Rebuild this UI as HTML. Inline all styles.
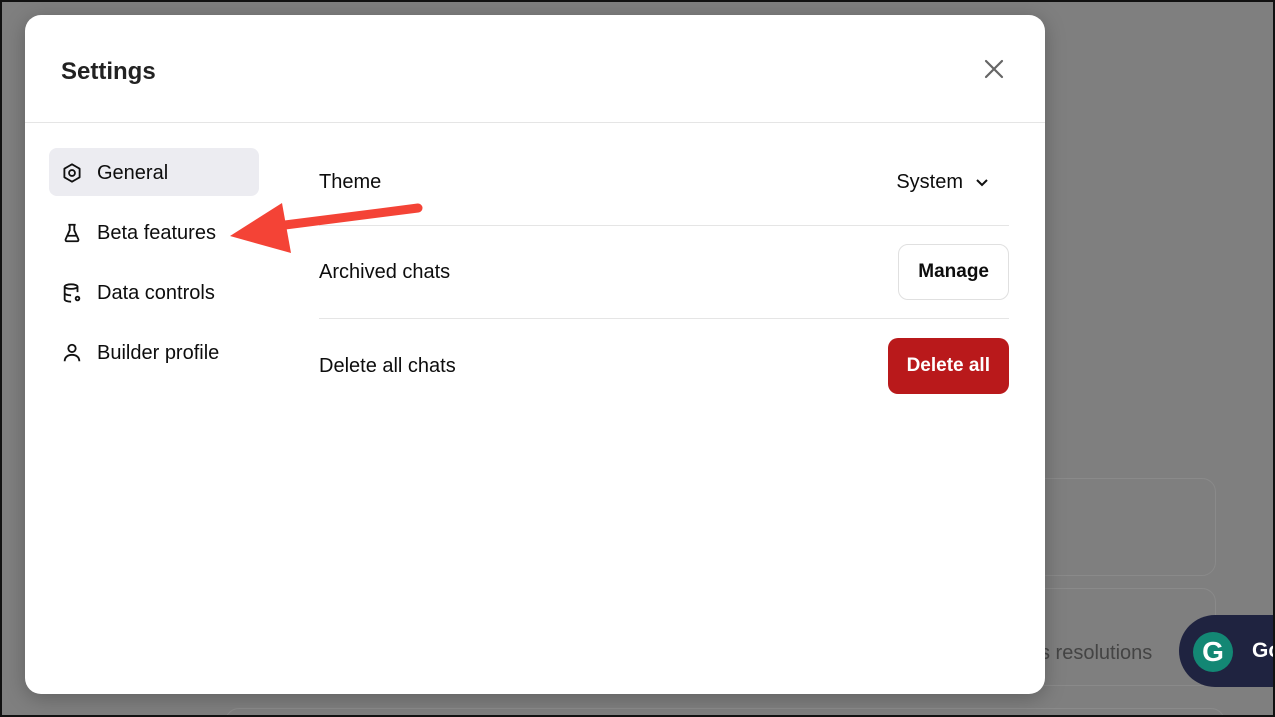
<!DOCTYPE html>
<html><head><style>
*{margin:0;padding:0;box-sizing:border-box}
html,body{width:1275px;height:717px;overflow:hidden}
body{background:#7f7f7f;position:relative;font-family:"Liberation Sans",sans-serif;color:#0d0d0d}
.frame{position:absolute;left:0;top:0;width:1275px;height:717px;border:2px solid #111;z-index:5;pointer-events:none}
.card{position:absolute;border:1px solid #8a8a8a;border-radius:14px}
.modal{position:absolute;left:25px;top:15px;width:1020px;height:679px;background:#fff;border-radius:16px;box-shadow:0 4px 20px rgba(0,0,0,.25)}
.hdr{height:108px;border-bottom:1px solid #e5e5e5;position:relative}
.hdr h1{position:absolute;left:36px;top:43px;font-size:24px;font-weight:700;color:#222}
.nav{position:absolute;left:24px;top:133px;width:210px}
.nav div{height:48px;margin-bottom:12px;border-radius:8px;display:flex;align-items:center;padding-left:12px;font-size:20px;padding-top:2px}
.nav div.act{background:#ececf1}
.nav svg{margin-right:14px}
.row{position:absolute;left:294px;width:690px;display:flex;align-items:center;justify-content:space-between;font-size:20px}
.btn{border:1px solid #e0e0e0;border-radius:10px;height:56px;padding:0 19px;display:flex;align-items:center;font-weight:700;font-size:19px}
.del{background:#b9191b;color:#fff;border:none;padding:0 19px}
</style></head><body>
<div class="frame"></div>
<div class="card" style="left:1000px;top:478px;width:216px;height:98px"></div>
<div class="card" style="left:1000px;top:588px;width:216px;height:98px"></div>
<div class="card" style="left:225px;top:708px;width:1000px;height:40px"></div>
<div style="position:absolute;left:1040px;top:642px;font-size:20px;color:#444">s resolutions</div>
<div style="position:absolute;left:1179px;top:615px;width:120px;height:72px;background:#1f2340;border-radius:36px 0 0 36px">
 <div style="position:absolute;left:14px;top:17px;width:40px;height:40px;border-radius:50%;background:#138774;color:#fff;font-size:28px;font-weight:700;text-align:center;line-height:40px">G</div>
 <div style="position:absolute;left:73px;top:24px;color:#fff;font-weight:700;font-size:21px">Go</div>
</div>
<div class="modal">
 <div class="hdr"><h1>Settings</h1>
  <svg style="position:absolute;left:959px;top:44px" width="20" height="20" viewBox="0 0 20 20"><path d="M2 2L18 18M18 2L2 18" stroke="#666" stroke-width="2.2" stroke-linecap="round"/></svg>
 </div>
 <div class="nav">
  <div class="act"><svg width="22" height="22" viewBox="0 0 24 24" fill="none" stroke="#111" stroke-width="2" stroke-linejoin="round"><path d="M12 2.5l4.2 2.4 4.1 2.4v9.4l-4.1 2.4-4.2 2.4-4.2-2.4-4.1-2.4V7.3l4.1-2.4z"/><circle cx="12" cy="12" r="3.2"/></svg>General</div>
  <div><svg width="22" height="22" viewBox="0 0 24 24" fill="none" stroke="#111" stroke-width="2"><path d="M8 3h8M9.5 3v6L5 19a1.5 1.5 0 001.4 2h11.2a1.5 1.5 0 001.4-2L14.5 9V3M6.5 15h11"/></svg>Beta features</div>
  <div><svg width="22" height="22" viewBox="0 0 24 24" fill="none" stroke="#111" stroke-width="2"><ellipse cx="11" cy="5" rx="7" ry="2.5"/><path d="M4 5v14c0 1.4 3 2.5 7 2.5M18 5v6M4 12c0 1.4 3 2.5 7 2.5"/><circle cx="18" cy="18" r="2" /></svg>Data controls</div>
  <div><svg width="22" height="22" viewBox="0 0 24 24" fill="none" stroke="#111" stroke-width="2"><circle cx="12" cy="7" r="4"/><path d="M4 21c0-4.5 3.5-7 8-7s8 2.5 8 7"/></svg>Builder profile</div>
 </div>
 <div class="row" style="top:121px;height:90px;border-bottom:1px solid #e5e5e5;padding-top:4px">
  <span>Theme</span><span style="margin-right:20px;display:flex;align-items:center">System<svg style="margin-left:12px" width="14" height="10" viewBox="0 0 14 10"><path d="M2 2l5 5 5-5" stroke="#111" stroke-width="2" fill="none"/></svg></span></div>
 <div class="row" style="top:211px;height:93px;border-bottom:1px solid #e5e5e5"><span>Archived chats</span><span class="btn">Manage</span></div>
 <div class="row" style="top:323px;height:56px"><span>Delete all chats</span><span class="btn del">Delete all</span></div>
</div>
<svg style="position:absolute;left:0;top:0" width="1275" height="717"><path d="M418 208L285 225" stroke="#f44336" stroke-width="9" stroke-linecap="round"/><path d="M230 236L282 203L291 253Z" fill="#f44336"/></svg>
</body></html>
